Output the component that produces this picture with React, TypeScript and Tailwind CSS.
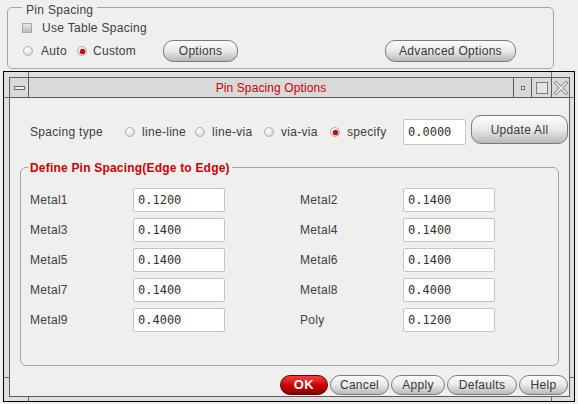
import React from 'react';

// Motif-style "Pin Spacing" panel with the Pin Spacing Options dialog

const FONT = { fontFamily: '"Liberation Sans", Arial, sans-serif' };
const MONO = { fontFamily: '"DejaVu Sans Mono", "Liberation Mono", monospace' };

const Radio: React.FC<{ checked?: boolean }> = ({ checked }) => (
  <span className="inline-flex h-[10px] w-[10px] shrink-0 items-center justify-center rounded-full border border-[#b0b0b0] bg-[radial-gradient(circle_at_35%_30%,#ffffff,#cfcfcf)]">
    {checked && <span className="h-[5px] w-[5px] rounded-full bg-[#d40000] shadow-[0_0_1px_#700]" />}
  </span>
);

const Checkbox: React.FC = () => (
  <span className="inline-block h-[10px] w-[10px] shrink-0 border border-[#a8a8a8] bg-linear-to-b from-[#e6e6e6] to-[#bdbdbd]" />
);

const PillButton: React.FC<{ label: string; width: string; height: string; primary?: boolean }> = ({
  label,
  width,
  height,
  primary,
}) =>
  primary ? (
    <button
      className={`${width} ${height} flex shrink-0 items-center justify-center rounded-[10px] border border-[#6a0000] bg-linear-to-b from-[#ff3a3a] via-[#cc0000] to-[#8a0000] text-[13px] font-bold tracking-[0.5px] text-white`}
    >
      {label}
    </button>
  ) : (
    <button
      className={`${width} ${height} flex shrink-0 items-center justify-center rounded-[10px] border border-[#7c7c7c] bg-linear-to-b from-[#fdfdfd] via-[#e9e9e9] to-[#b9b9b9] text-[12px] tracking-[0.3px] text-[#383838]`}
    >
      {label}
    </button>
  );

const ValueBox: React.FC<{ value: string; width: string; height: string }> = ({ value, width, height }) => (
  <div
    className={`${width} ${height} flex shrink-0 items-center rounded-[2px] border border-[#c4c4c4] bg-white pl-[4px] text-[12px] text-[#333]`}
    style={MONO}
  >
    {value}
  </div>
);

const rows = [
  ['Metal1', '0.1200', 'Metal2', '0.1400'],
  ['Metal3', '0.1400', 'Metal4', '0.1400'],
  ['Metal5', '0.1400', 'Metal6', '0.1400'],
  ['Metal7', '0.1400', 'Metal8', '0.4000'],
  ['Metal9', '0.4000', 'Poly', '0.1200'],
];

const App: React.FC = () => {
  return (
    <div className="h-[404px] w-[578px] overflow-hidden bg-[#efefef] text-[12px] text-[#404040]" style={FONT}>
      {/* Pin Spacing group */}
      <div className="relative ml-[7px] mt-[7px] h-[62px] w-[547px] rounded-[5px] border border-[#a4a4a4] pl-[14px] pt-[13px]">
        <span className="absolute -top-[5px] left-[14px] bg-[#efefef] px-[4px] leading-[14px] tracking-[0.3px]">
          Pin Spacing
        </span>
        <div className="flex h-[14px] items-center">
          <Checkbox />
          <span className="ml-[10px] tracking-[0.3px]">Use Table Spacing</span>
        </div>
        <div className="mt-[5px] flex h-[22px] items-center">
          <div className="flex w-[55px] items-center pl-[1px]">
            <Radio />
            <span className="ml-[8px] tracking-[0.3px]">Auto</span>
          </div>
          <div className="flex w-[86px] items-center">
            <Radio checked />
            <span className="ml-[6px] tracking-[0.3px]">Custom</span>
          </div>
          <PillButton label="Options" width="w-[75px]" height="h-[22px]" />
          <div className="ml-[147px]">
            <PillButton label="Advanced Options" width="w-[131px]" height="h-[22px]" />
          </div>
        </div>
      </div>

      {/* Pin Spacing Options window */}
      <div className="relative ml-[3px] mt-[2px] h-[331px] w-[572px] border border-black bg-[#dedede] pb-[4px] pl-[5px] pr-[4px] pt-[5px]">
        {/* frame resize handle ticks */}
        <span className="absolute left-[24px] top-0 h-[5px] w-px bg-[#707070]" />
        <span className="absolute left-[547px] top-0 h-[5px] w-px bg-[#707070]" />
        <span className="absolute bottom-0 left-[24px] h-[4px] w-px bg-[#707070]" />
        <span className="absolute bottom-0 left-[547px] h-[4px] w-px bg-[#707070]" />
        <span className="absolute left-0 top-[25px] h-px w-[5px] bg-[#707070]" />
        <span className="absolute left-0 top-[305px] h-px w-[5px] bg-[#707070]" />
        <span className="absolute right-0 top-[25px] h-px w-[4px] bg-[#707070]" />
        <span className="absolute right-0 top-[305px] h-px w-[4px] bg-[#707070]" />

        <div className="flex h-full flex-col border border-[#5c5c5c]">
          {/* title bar */}
          <div className="flex h-[20px] shrink-0 border-b border-[#5c5c5c] bg-[#d9d9d9]">
            <div className="flex w-[19px] items-center justify-center border-r border-[#5c5c5c]">
              <span className="h-[4px] w-[11px] border border-[#6a6a6a] bg-[#f2f2f2]" />
            </div>
            <div className="flex flex-1 items-center justify-center tracking-[0.1px] text-[#d00000]">
              Pin Spacing Options
            </div>
            <div className="flex w-[18px] items-center justify-center border-l border-[#5c5c5c]">
              <span className="h-[4px] w-[4px] border border-[#6a6a6a] bg-[#f2f2f2]" />
            </div>
            <div className="flex w-[20px] items-center justify-center border-l border-[#5c5c5c]">
              <span className="h-[12px] w-[12px] border border-[#7a7a7a] bg-[#e4e4e4]" />
            </div>
            <div className="flex w-[18px] items-center justify-center border-l border-[#5c5c5c]">
              <svg width="14" height="14" viewBox="0 0 14 14">
                <path d="M2 2 L12 12 M12 2 L2 12" stroke="#8a8a8a" strokeWidth="3.4" strokeLinecap="square" />
                <path d="M2 2 L12 12 M12 2 L2 12" stroke="#f0f0f0" strokeWidth="1.6" strokeLinecap="square" />
              </svg>
            </div>
          </div>

          {/* dialog body */}
          <div className="flex flex-1 flex-col bg-[#efefef]">
            <div className="mt-[17px] flex h-[30px] items-start pl-[20px]">
              <div className="flex h-[34px] items-center">
                <span className="w-[95px] tracking-[0.3px]">Spacing type</span>
                <div className="flex w-[70px] items-center">
                  <Radio />
                  <span className="ml-[7px] tracking-[0.3px]">line-line</span>
                </div>
                <div className="flex w-[69px] items-center">
                  <Radio />
                  <span className="ml-[7px] tracking-[0.3px]">line-via</span>
                </div>
                <div className="flex w-[66px] items-center">
                  <Radio />
                  <span className="ml-[7px] tracking-[0.3px]">via-via</span>
                </div>
                <div className="flex w-[73px] items-center">
                  <Radio checked />
                  <span className="ml-[7px] tracking-[0.3px]">specify</span>
                </div>
              </div>
              <div className="mt-[4px]">
                <ValueBox value="0.0000" width="w-[63px]" height="h-[26px]" />
              </div>
              <div className="ml-[5px]">
                <PillButton label="Update All" width="w-[97px]" height="h-[29px]" />
              </div>
            </div>

            {/* Define Pin Spacing group */}
            <div className="relative ml-[10px] mt-[22px] h-[199px] w-[539px] rounded-[6px] border border-[#a4a4a4] pl-[9px] pt-[20px]">
              <span className="absolute -top-[7px] left-[7px] bg-[#efefef] px-[2px] font-bold leading-[14px] tracking-[0.2px] text-[#d00000]">
                Define Pin Spacing(Edge to Edge)
              </span>
              <div className="flex flex-col gap-[6px]">
                {rows.map(([l1, v1, l2, v2]) => (
                  <div key={l1} className="flex h-[24px] items-center">
                    <span className="w-[103px] tracking-[0.3px]">{l1}</span>
                    <ValueBox value={v1} width="w-[92px]" height="h-[24px]" />
                    <span className="ml-[75px] w-[103px] tracking-[0.3px]">{l2}</span>
                    <ValueBox value={v2} width="w-[92px]" height="h-[24px]" />
                  </div>
                ))}
              </div>
            </div>

            {/* bottom buttons */}
            <div className="mt-[9px] flex justify-end gap-[2px] pr-[1px]">
              <PillButton label="OK" width="w-[48px]" height="h-[20px]" primary />
              <PillButton label="Cancel" width="w-[59px]" height="h-[20px]" />
              <PillButton label="Apply" width="w-[54px]" height="h-[20px]" />
              <PillButton label="Defaults" width="w-[70px]" height="h-[20px]" />
              <PillButton label="Help" width="w-[49px]" height="h-[20px]" />
            </div>
          </div>
        </div>
      </div>
    </div>
  );
};

export default App;
